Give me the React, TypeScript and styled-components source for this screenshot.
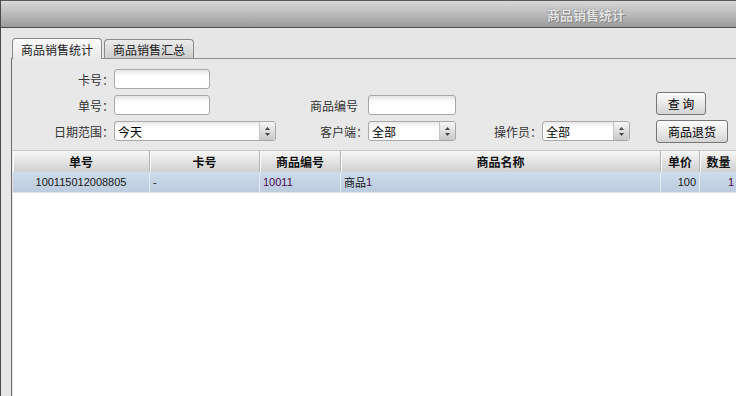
import React from "react";
import styled, { createGlobalStyle } from "styled-components";

const GlobalStyle = createGlobalStyle`
  html, body {
    margin: 0;
    padding: 0;
  }
  body {
    background: #e6e6e6;
    font-family: "Liberation Sans", "Noto Sans CJK SC", sans-serif;
    font-size: 12px;
  }
`;

const columns = "137px 110px 81px 320px 39px 38px";

const rows = [
  {
    id: "100115012008805",
    card: "-",
    code: "10011",
    name: "商品",
    nameNo: "1",
    price: "100",
    qty: "1",
  },
];

const Arrows = () => (
  <svg width="7" height="11" viewBox="0 0 7 11">
    <path d="M3.5 1 L6 4 L1 4 Z" fill="#444" />
    <path d="M3.5 10 L6 7 L1 7 Z" fill="#444" />
  </svg>
);

export default function App() {
  return (
    <>
      <GlobalStyle />
      <Window>
        <TitleBar>
          <Title>商品销售统计</Title>
        </TitleBar>
        <Body>
          <TabStrip>
            <Tab $active>商品销售统计</Tab>
            <Tab>商品销售汇总</Tab>
          </TabStrip>
          <Panel>
            <Form>
              <Label $start>卡号：</Label>
              <Input $w={96} />

              <Label $start>单号：</Label>
              <Input $w={96} />
              <Label $pad={10}>商品编号</Label>
              <Input />
              <Button $w={50} $align="end">
                查 询
              </Button>

              <Label $start>日期范围：</Label>
              <Select>
                <SelectText>今天</SelectText>
                <SelectArrow>
                  <Arrows />
                </SelectArrow>
              </Select>
              <Label>客户端：</Label>
              <Select>
                <SelectText>全部</SelectText>
                <SelectArrow>
                  <Arrows />
                </SelectArrow>
              </Select>
              <Label>操作员：</Label>
              <Select>
                <SelectText>全部</SelectText>
                <SelectArrow>
                  <Arrows />
                </SelectArrow>
              </Select>
              <Button $w={72} $align="center">
                商品退货
              </Button>
            </Form>
            <Table>
              <HeadRow>
                <HeadCell>单号</HeadCell>
                <HeadCell>卡号</HeadCell>
                <HeadCell>商品编号</HeadCell>
                <HeadCell>商品名称</HeadCell>
                <HeadCell>单价</HeadCell>
                <HeadCell>数量</HeadCell>
              </HeadRow>
              {rows.map((r) => (
                <DataRow key={r.id}>
                  <Cell $align="center">{r.id}</Cell>
                  <Cell>{r.card}</Cell>
                  <Cell $color="#4a0a4e">{r.code}</Cell>
                  <Cell $color="#111">
                    {r.name}
                    <Purple>{r.nameNo}</Purple>
                  </Cell>
                  <Cell $align="right">{r.price}</Cell>
                  <Cell $align="right" $color="#4a0a4e">
                    {r.qty}
                  </Cell>
                </DataRow>
              ))}
            </Table>
          </Panel>
        </Body>
      </Window>
    </>
  );
}

const Window = styled.div`
  width: 736px;
  height: 396px;
  box-sizing: border-box;
  border-left: 1px solid #4a4a4a;
  overflow: hidden;
  display: flex;
  flex-direction: column;
`;

const TitleBar = styled.div`
  height: 28px;
  box-sizing: border-box;
  border-top: 1px solid #5a5a5a;
  border-bottom: 1px solid #4e4e4e;
  background: linear-gradient(#d8d8d8, #9c9c9c);
  padding-left: 546px;
  display: flex;
  align-items: center;
  flex-shrink: 0;
`;

const Title = styled.div`
  font-family: "Noto Sans CJK SC", sans-serif;
  font-size: 13px;
  font-weight: 700;
  color: #e4e4e4;
  text-shadow: 0 0 1px #666, 1px 1px 0 #8a8a8a;
`;

const Body = styled.div`
  flex: 1;
  display: flex;
  flex-direction: column;
  padding: 10px 0 0 10px;
  min-height: 0;
`;

const TabStrip = styled.div`
  display: flex;
  align-items: flex-end;
  gap: 2px;
  height: 21px;
  padding-left: 1px;
  margin-bottom: -1px;
  position: relative;
  z-index: 1;
`;

const Tab = styled.div<{ $active?: boolean }>`
  height: ${(p) => (p.$active ? 21 : 19)}px;
  margin-bottom: ${(p) => (p.$active ? 0 : 1)}px;
  box-sizing: border-box;
  padding: 0 8px;
  border: 1px solid #8a8a8a;
  border-bottom: none;
  border-radius: 4px 4px 0 0;
  background: ${(p) =>
    p.$active
      ? "linear-gradient(#fcfcfc, #e8e8e8)"
      : "linear-gradient(#ececec, #cdcdcd)"};
  font-family: "Noto Sans CJK SC", sans-serif;
  font-size: 12px;
  color: #222;
  display: flex;
  align-items: center;
`;

const Panel = styled.div`
  flex: 1;
  display: flex;
  flex-direction: column;
  border-top: 1px solid #8e8e8e;
  border-left: 1px solid #6a6a6a;
  background: #e8e8e8;
  min-height: 0;
`;

const Form = styled.div`
  display: grid;
  grid-template-columns: 102px 162px 92px 88px 86px 88px auto;
  grid-auto-rows: 20px;
  row-gap: 6px;
  padding: 10px 0 9px;
`;

const Label = styled.div<{ $start?: boolean; $pad?: number }>`
  ${(p) => (p.$start ? "grid-column: 1;" : "")}
  justify-self: end;
  align-self: center;
  padding-right: ${(p) => p.$pad ?? 0}px;
  font-family: "Noto Sans CJK SC", sans-serif;
  font-size: 12px;
  color: #333;
  white-space: nowrap;
`;

const Input = styled.div<{ $w?: number }>`
  width: ${(p) => (p.$w ? `${p.$w}px` : "100%")};
  height: 20px;
  box-sizing: border-box;
  border: 1px solid #a8a8a8;
  border-radius: 3px;
  background: linear-gradient(#e4e4e4 0, #fff 6px);
`;

const Select = styled.div`
  height: 20px;
  box-sizing: border-box;
  border: 1px solid #a8a8a8;
  border-radius: 3px;
  background: linear-gradient(#eaeaea 0, #fff 6px);
  display: flex;
  overflow: hidden;
`;

const SelectText = styled.div`
  flex: 1;
  padding-left: 3px;
  display: flex;
  align-items: center;
  font-family: "Noto Sans CJK SC", sans-serif;
  font-size: 12px;
  color: #000;
`;

const SelectArrow = styled.div`
  width: 15px;
  border-left: 1px solid #c4c4c4;
  background: linear-gradient(#f6f6f6, #c8c8c8);
  display: flex;
  align-items: center;
  justify-content: center;
`;

const Button = styled.div<{ $w: number; $align: string }>`
  grid-column: 7;
  justify-self: start;
  align-self: ${(p) => p.$align};
  margin-left: 26px;
  width: ${(p) => p.$w}px;
  height: 23px;
  box-sizing: border-box;
  border: 1px solid #777;
  border-radius: 3px;
  background: linear-gradient(#fdfdfd, #d4d4d4);
  display: flex;
  align-items: center;
  justify-content: center;
  font-family: "Noto Sans CJK SC", sans-serif;
  font-size: 12px;
  color: #000;
  white-space: pre;
`;

const Table = styled.div`
  flex: 1;
  margin-left: 1px;
  background: #fff;
`;

const HeadRow = styled.div`
  display: grid;
  grid-template-columns: ${columns};
  height: 22px;
  box-sizing: border-box;
  border-top: 1px solid #c8c8c8;
  background: linear-gradient(#f7f7f7, #cfcfcf);
`;

const HeadCell = styled.div`
  border-right: 1px solid #b4b4b4;
  box-shadow: inset 1px 0 #fbfbfb;
  display: flex;
  align-items: center;
  justify-content: center;
  font-family: "Noto Sans CJK SC", sans-serif;
  font-size: 12px;
  font-weight: 700;
  color: #111;
`;

const DataRow = styled.div`
  display: grid;
  grid-template-columns: ${columns};
  height: 21px;
  box-sizing: border-box;
  border-bottom: 1px solid #e2e2e2;
  background: linear-gradient(#cddcec, #bccbdd);
`;

const Cell = styled.div<{ $align?: string; $color?: string }>`
  border-right: 1px solid #e4e9f0;
  padding: 0 3px;
  display: flex;
  align-items: center;
  justify-content: ${(p) =>
    p.$align === "center"
      ? "center"
      : p.$align === "right"
      ? "flex-end"
      : "flex-start"};
  font-family: "Liberation Sans", "Noto Sans CJK SC", sans-serif;
  font-size: 11px;
  color: ${(p) => p.$color ?? "#1a1a1a"};
  white-space: nowrap;
`;

const Purple = styled.span`
  color: #4a0a4e;
`;
